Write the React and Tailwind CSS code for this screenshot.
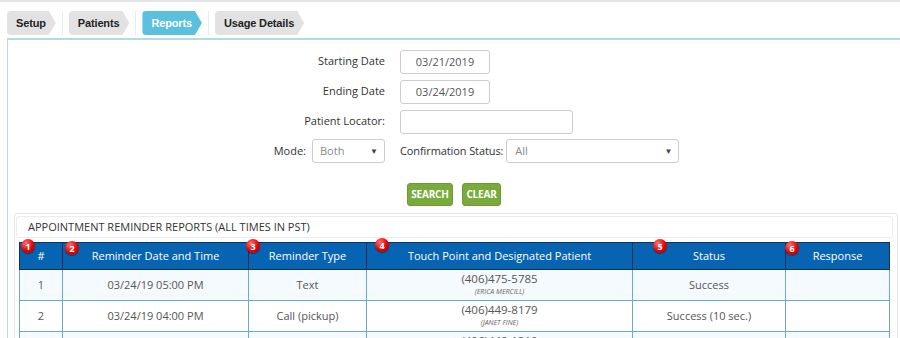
import React from 'react';

const tabs = [
  { label: 'Setup', active: false },
  { label: 'Patients', active: false },
  { label: 'Reports', active: true },
  { label: 'Usage Details', active: false },
];

const columns = [
  { label: '#', width: 'w-[43px]', badge: 1, pos: 'left-[1px] -top-[4px]' },
  { label: 'Reminder Date and Time', width: 'w-[186px]', badge: 2, pos: 'left-[2px] -top-[2px]' },
  { label: 'Reminder Type', width: 'w-[118px]', badge: 3, pos: '-left-[3px] -top-[4px]' },
  { label: 'Touch Point and Designated Patient', width: 'w-[266px]', badge: 4, pos: 'left-[8px] -top-[5px]' },
  { label: 'Status', width: 'w-[153px]', badge: 5, pos: 'left-[20px] -top-[4px]' },
  { label: 'Response', width: 'w-[104px]', badge: 6, pos: '-left-[1px] -top-[2px]' },
];

const rows = [
  { n: 1, date: '03/24/19 05:00 PM', type: 'Text', phone: '(406)475-5785', name: '(ERICA MERCILL)', status: 'Success' },
  { n: 2, date: '03/24/19 04:00 PM', type: 'Call (pickup)', phone: '(406)449-8179', name: '(JANET FINE)', status: 'Success (10 sec.)' },
  { n: 3, date: '03/24/19 03:00 PM', type: 'Text', phone: '(406)442-1310', name: '(MARK HILL)', status: 'Success' },
];

const font = { fontFamily: '"Open Sans", "Liberation Sans", sans-serif' };

const Badge = ({ n, pos }) => (
  <span
    className={`absolute ${pos} z-10 flex h-[14px] w-[14px] items-center justify-center rounded-full bg-[radial-gradient(circle_at_35%_30%,#ff7070,#e00000_55%,#b80000)] text-[9px] font-bold leading-none text-white shadow-[0_1px_1px_rgba(0,0,0,0.4)]`}
  >
    {n}
  </span>
);

const FormRow = ({ label, children }) => (
  <div className="flex h-[24px] items-center">
    <div className="w-[377px] text-right text-[11px] text-[#333]">{label}</div>
    <div className="ml-[15px]">{children}</div>
  </div>
);

const App = () => {
  return (
    <div className="h-[338px] overflow-hidden border-t-2 border-[#e4e4e4] bg-white" style={font}>
      {/* tabs */}
      <div className="flex items-center pl-[7px] pt-[9px]" style={{ fontFamily: '"Liberation Sans", Arial, sans-serif' }}>
        {tabs.map((t, i) => (
          <React.Fragment key={t.label}>
            {i > 0 && <div className="mx-[6px] h-[24px] w-px bg-[#e3eef2]" />}
            <div
              className={`flex h-[24px] items-center rounded-l-[4px] pl-[9px] pr-[10px] text-[11px] font-bold tracking-[-0.15px] [clip-path:polygon(0_0,calc(100%-7px)_0,100%_50%,calc(100%-7px)_100%,0_100%)] ${
                t.active ? 'bg-[#5bc0de] text-white' : 'bg-[#e2e2e2] text-[#222]'
              }`}
            >
              {t.label}
            </div>
          </React.Fragment>
        ))}
      </div>

      {/* main panel */}
      <div className="ml-[7px] mt-[3px] border-l border-t-2 border-[#b4dbe5] pb-4">
        <div className="flex flex-col gap-[6px] pt-[9px]">
          <FormRow label="Starting Date">
            <input
              readOnly
              value="03/21/2019"
              className="h-[24px] w-[90px] rounded-[3px] border border-[#ccc] text-center text-[11px] text-[#555] outline-none"
            />
          </FormRow>
          <FormRow label="Ending Date">
            <input
              readOnly
              value="03/24/2019"
              className="h-[24px] w-[90px] rounded-[3px] border border-[#ccc] text-center text-[11px] text-[#555] outline-none"
            />
          </FormRow>
          <FormRow label="Patient Locator:">
            <input
              readOnly
              value=""
              className="h-[24px] w-[173px] rounded-[3px] border border-[#ccc] text-[11px] outline-none"
            />
          </FormRow>
          <div className="flex h-[24px] items-center">
            <div className="flex w-[377px] items-center justify-end gap-[6px] text-[11px] text-[#333]">
              <span>Mode:</span>
              <div className="flex h-[24px] w-[73px] items-center justify-between rounded-[3px] border border-[#ccc] pl-[7px] pr-[6px] text-[#888]">
                <span>Both</span>
                <span className="text-[8px] text-[#444]">▼</span>
              </div>
            </div>
            <div className="ml-[15px] flex items-center gap-[3px] text-[11px] tracking-[-0.1px] text-[#333]">
              <span>Confirmation Status:</span>
              <div className="flex h-[24px] w-[173px] items-center justify-between rounded-[3px] border border-[#ccc] pl-[8px] pr-[6px] text-[#888]">
                <span>All</span>
                <span className="text-[8px] text-[#444]">▼</span>
              </div>
            </div>
          </div>
        </div>

        {/* buttons */}
        <div className="mt-[20px] flex gap-[9px] pl-[399px]">
          <button className="h-[23px] w-[46px] rounded-[3px] border border-[#6b9a33] bg-[#78aa3c] text-[10px] font-bold tracking-[-0.2px] text-white">
            SEARCH
          </button>
          <button className="h-[23px] w-[39px] rounded-[3px] border border-[#6b9a33] bg-[#78aa3c] text-[10px] font-bold tracking-[-0.2px] text-white">
            CLEAR
          </button>
        </div>

        {/* report section */}
        <div className="ml-[6px] mt-[7px] w-[884px] rounded-[3px] border border-[#e6e6e6]">
          <div className="ml-[1px] mr-[4px] mt-[2px] flex h-[22px] items-center rounded-[3px] border border-[#ececec] pl-[11px] text-[11px] text-[#333]">
            APPOINTMENT REMINDER REPORTS (ALL TIMES IN PST)
          </div>
          <div className="pl-[4px] pt-[4px]">
            <table className="w-[870px] table-fixed border-collapse text-[11px]">
              <colgroup>
                {columns.map((c) => (
                  <col key={c.label} className={c.width} />
                ))}
              </colgroup>
              <thead>
                <tr className="h-[27px] bg-[#0764b2] text-white">
                  {columns.map((c) => (
                    <th key={c.label} className="relative border border-[#183150] font-normal">
                      <Badge n={c.badge} pos={c.pos} />
                      {c.label}
                    </th>
                  ))}
                </tr>
              </thead>
              <tbody className="text-[#555]">
                {rows.map((r, i) => (
                  <tr key={r.n} className={`h-[31px] ${i % 2 === 0 ? 'bg-[#f5faff]' : 'bg-white'}`}>
                    <td className="border border-[#6ba6dc] text-center">{r.n}</td>
                    <td className="border border-[#6ba6dc] text-center">{r.date}</td>
                    <td className="border border-[#6ba6dc] text-center">{r.type}</td>
                    <td className="border border-[#6ba6dc] text-center leading-[13px]">
                      <div className="text-[11.5px]">{r.phone}</div>
                      <div className="text-[7px] italic text-[#666]">{r.name}</div>
                    </td>
                    <td className="border border-[#6ba6dc] text-center">{r.status}</td>
                    <td className="border border-[#6ba6dc]"></td>
                  </tr>
                ))}
              </tbody>
            </table>
          </div>
        </div>
      </div>
    </div>
  );
};

export default App;
